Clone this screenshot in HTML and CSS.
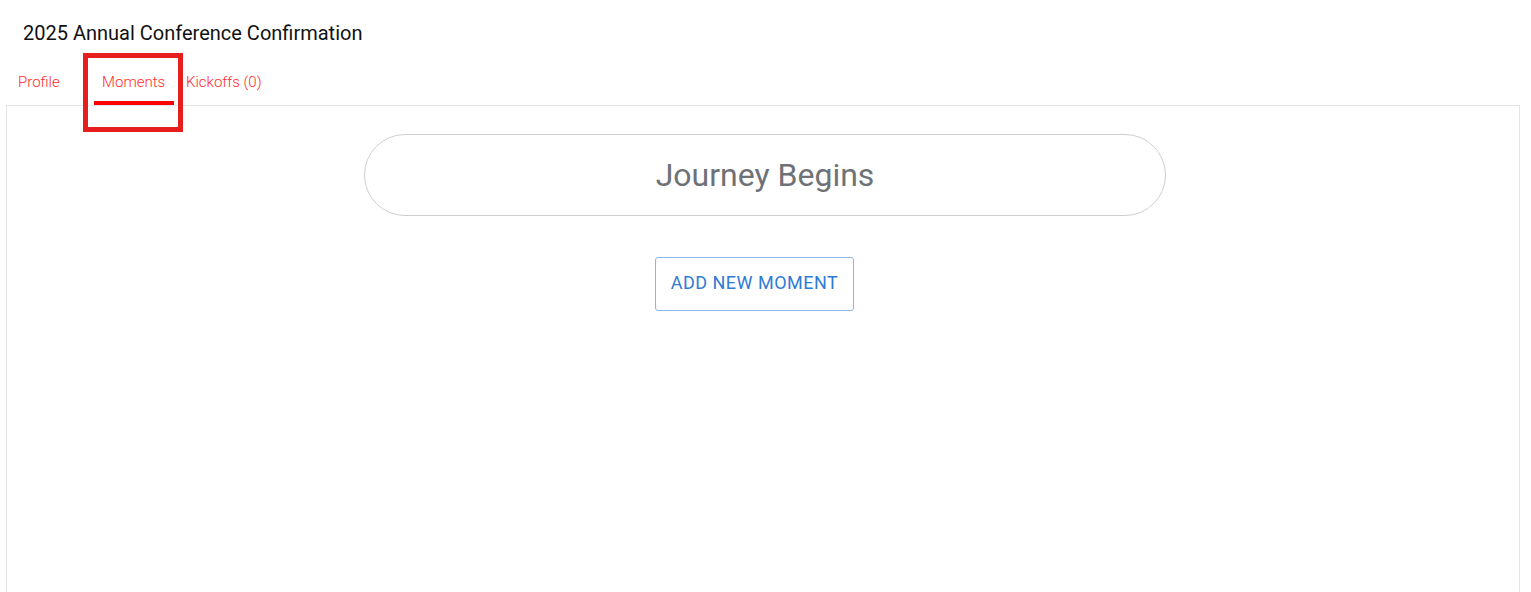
FILE: index.html
```html
<!DOCTYPE html>
<html>
<head>
<meta charset="utf-8">
<link rel="stylesheet" href="styles.css">
</head>
<body>
<div class="page">
  <h1 class="title">2025 Annual Conference Confirmation</h1>
  <nav class="tabs">
    <a class="tab">Profile</a>
    <a class="tab active">Moments</a>
    <a class="tab">Kickoffs (0)</a>
  </nav>
  <div class="panel">
    <div class="pill">Journey Begins</div>
    <button class="add-btn">ADD NEW MOMENT</button>
  </div>
  <div class="highlight"></div>
</div>
</body>
</html>
```
FILE: styles.css
```css
* { box-sizing: border-box; }
html, body { margin: 0; padding: 0; background: #fff; overflow: hidden; }
body { font-family: Roboto, "Liberation Sans", sans-serif; }
.page { position: relative; padding: 0 11px 0 6px; }
.title {
  margin: 0;
  padding: 21px 0 0 17px;
  font-size: 20px;
  font-weight: 400;
  line-height: 24px;
  color: #111;
}
.tabs {
  display: flex;
  gap: 4px;
  padding: 22px 0 0 4px;
}
.tab {
  min-width: 80px;
  padding: 0 8px;
  height: 38px;
  line-height: 30px;
  font-size: 15px;
  font-weight: 300;
  color: #ff2b2b;
  border-bottom: 4px solid transparent;
}
.tab.active { border-bottom-color: #ff0000; }
.panel {
  border: 1px solid #e6e6e6;
  border-bottom: none;
  height: 487px;
  padding-top: 28px;
}
.pill {
  width: 802px;
  height: 82px;
  margin-left: 357px;
  border: 1px solid #cfcfcf;
  border-radius: 41px;
  text-align: center;
  line-height: 80px;
  font-size: 32px;
  color: #6e7276;
}
.add-btn {
  display: block;
  margin: 41px 0 0 648px;
  width: 199px;
  height: 54px;
  background: #fff;
  border: 1px solid #8db6e6;
  border-radius: 3px;
  font-family: Roboto, "Liberation Sans", sans-serif;
  font-size: 18px;
  letter-spacing: 0.5px;
  color: #2f7bd6;
  padding: 0 0 4px 0;
}
.highlight {
  position: absolute;
  left: 83px;
  top: 53px;
  width: 100px;
  height: 79px;
  border: 5px solid #e61e1e;
}
```
